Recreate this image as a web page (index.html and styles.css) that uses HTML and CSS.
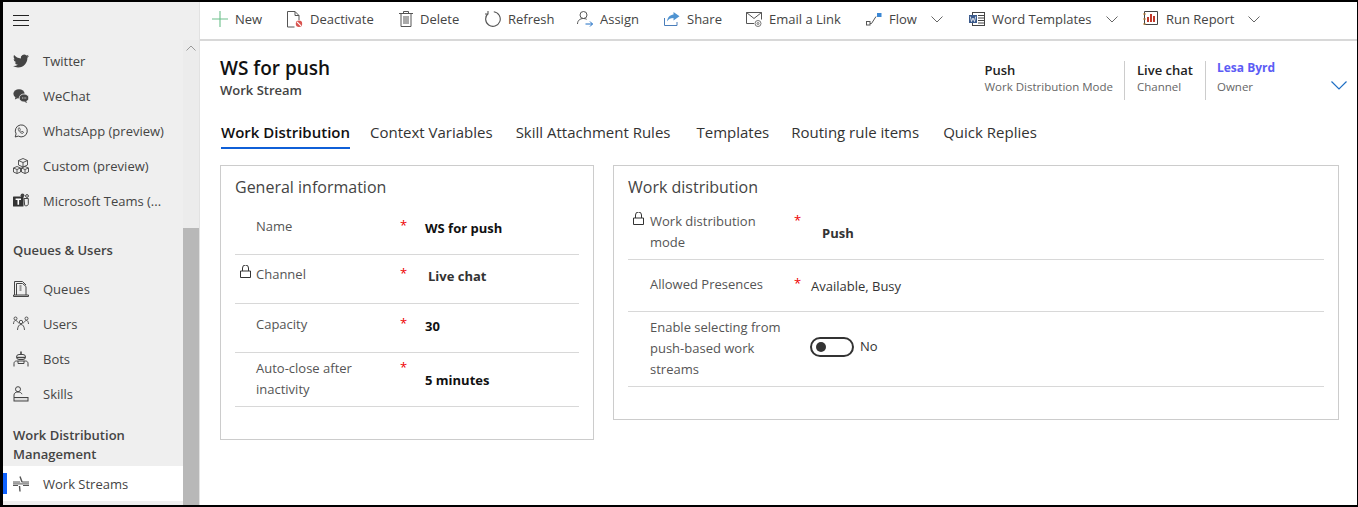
FILE: index.html
```html
<!DOCTYPE html>
<html>
<head>
    <title>Work Stream - WS for push</title>
    <link rel="stylesheet" href="styles.css">
</head>
<body>
    <div class="frame">
        <aside class="sidebar">
            <div class="burger"><span></span><span></span><span></span></div>
            <div class="side-body">
                <nav class="side-list">
                    <a class="side-item first">
                        <svg width="16" height="16" viewBox="0 0 24 24"><path fill="#444" d="M23.953 4.57a10 10 0 01-2.825.775 4.958 4.958 0 002.163-2.723c-.951.555-2.005.959-3.127 1.184a4.92 4.92 0 00-8.384 4.482C7.69 8.095 4.067 6.13 1.64 3.162a4.822 4.822 0 00-.666 2.475c0 1.71.87 3.213 2.188 4.096a4.904 4.904 0 01-2.228-.616v.06a4.923 4.923 0 003.946 4.827 4.996 4.996 0 01-2.212.085 4.936 4.936 0 004.604 3.417 9.867 9.867 0 01-6.102 2.105c-.39 0-.779-.023-1.17-.067a13.995 13.995 0 007.557 2.209c9.053 0 13.998-7.496 13.998-13.985 0-.21 0-.42-.015-.63A9.935 9.935 0 0024 4.59z"/></svg>
                        Twitter
                    </a>
                    <a class="side-item">
                        <svg width="16" height="16" viewBox="0 0 16 16"><ellipse cx="6" cy="5.8" rx="5.6" ry="4.6" fill="#444"/><path fill="#444" d="M2.5 9l-.6 2.6L5 10z"/><ellipse cx="11" cy="10" rx="4.8" ry="4" fill="#444" stroke="#efefef" stroke-width=".8"/><path fill="#444" d="M13 13l1.2 2-3-1.2z"/><path d="M9 10h.8M10.700 10h.8M12.400 10h.8" stroke="#efefef"/></svg>
                        WeChat
                    </a>
                    <a class="side-item">
                        <svg width="16" height="16" viewBox="0 0 16 16" fill="none" stroke="#444"><path d="M2.2 14l.9-3.1A6 6 0 1 1 5.3 13.1z"/><path d="M5.8 4.8c-.9.8-.6 2.3.6 3.8s2.8 2.2 3.6 1.5l.6-.9-1.600-1-.7.6c-.7-.3-1.200-.9-1.600-1.600l.6-.7-.9-1.700z" stroke-width=".8"/></svg>
                        WhatsApp (preview)
                    </a>
                    <a class="side-item">
                        <svg width="16" height="16" viewBox="0 0 16 16" fill="none" stroke="#444" stroke-width=".9"><path d="M5.500 2.500L10 .5l4.500 2v4.500L10 9 5.500 7z"/><path d="M5.500 2.500L10 4.500l4.500-2M10 4.500V9"/><path d="M.5 10l3.500-1.500L7.500 10v4L4 15.500.5 14z"/><path d="M.5 10L4 11.500 7.500 10M4 11.500v4"/><path d="M8.500 10l3.500-1.500 3.500 1.500v4L12 15.500 8.500 14z"/><path d="M8.500 10l3.500 1.500 3.500-1.500M12 11.500v4"/></svg>
                        Custom (preview)
                    </a>
                    <a class="side-item">
                        <svg width="16" height="16" viewBox="0 0 16 16"><circle cx="9.500" cy="2.300" r="1.900" fill="#444"/><circle cx="14" cy="3" r="1.400" fill="none" stroke="#444"/><path d="M11 5.500h4.300v5.300c0 1.300-1 2-2.200 2-.5 0-1-.1-1.400-.4z" fill="none" stroke="#444"/><rect x="0" y="3.500" width="10.500" height="10" rx=".6" fill="#333"/><path fill="#fff" d="M2.600 5.600h5.400v1.500H6.100v4.600H4.500V7.100H2.600z"/></svg>
                        Microsoft Teams (...
                    </a>
                    <h3 class="side-head queues">Queues &amp; Users</h3>
                    <a class="side-item">
                        <svg width="16" height="16" viewBox="0 0 16 16" fill="none" stroke="#444"><path d="M1.500 14V.5h8l3.500 3.500"/><path d="M3.500 14V2.500h6l3.500 3V14" /><path d="M.5 15.500h15v-1.500H.5z" fill="#ddd"/><path d="M6.500 5h2M6.500 7h2M6.500 9h2" /></svg>
                        Queues
                    </a>
                    <a class="side-item">
                        <svg width="16" height="16" viewBox="0 0 16 16" fill="none" stroke="#444" stroke-width=".9"><circle cx="8" cy="6" r="1.700"/><circle cx="2.500" cy="2.500" r="1.500"/><circle cx="13.500" cy="2.500" r="1.500"/><path d="M4.500 14c.2-3.400 1.500-5.500 3.500-5.500s3.300 2.100 3.500 5.500"/><path d="M.5 8c.1-2 .8-3.500 2-3.500s2.500 1.500 3.500 3M15.500 8c-.1-2-.8-3.500-2-3.500s-2.500 1.500-3.500 3"/></svg>
                        Users
                    </a>
                    <a class="side-item">
                        <svg width="16" height="16" viewBox="0 0 16 16" fill="none" stroke="#444"><path d="M8 .5v2.500" stroke-width="1.600"/><rect x="3.500" y="3.500" width="9" height="5" rx="2.500"/><path d="M4 6.500h8" stroke-width="1.400"/><path d="M1 15.500v-3c0-1.500 1-2.500 2.500-2.500h9c1.500 0 2.500 1 2.500 2.500v3M5 10v2.500h6V10"/></svg>
                        Bots
                    </a>
                    <a class="side-item">
                        <svg width="16" height="16" viewBox="0 0 16 16" fill="none" stroke="#444"><circle cx="5" cy="3.200" r="2.500"/><path d="M1 11V9c0-1.800 1.500-3 4-3 2 0 3.500.8 4 2.200"/><rect x="1" y="11.500" width="14" height="3.500" fill="#ddd"/></svg>
                        Skills
                    </a>
                    <h3 class="side-head work">Work Distribution Management</h3>
                    <a class="side-item selected">
                        <svg width="16" height="16" viewBox="0 0 16 16" fill="none" stroke="#555"><path d="M7 .5L9 6M7 15.500L6.500 10" stroke-width="1.400"/><path d="M0 6h7M0 9.500h5M16 6H9M16 9.500h-6" /><path d="M0 7.700h16" stroke-width="2" stroke="#999"/></svg>
                        Work Streams
                    </a>
                </nav>
                <div class="scrollbar">
                    <div class="scroll-up"><svg width="10" height="6" viewBox="0 0 10 6" fill="none" stroke="#999"><path d="M.5 5.500L5 1l4.500 4.500"/></svg></div>
                    <div class="scroll-thumb"></div>
                </div>
            </div>
        </aside>
        <div class="main">
            <div class="commandbar">
                <a class="cmd cmd-new">
                    <svg width="16" height="16" viewBox="0 0 16 16" fill="none" stroke="#6cc08b" stroke-width="1.100"><path d="M8 0v16M0 8h16"/></svg>
                    New
                </a>
                <a class="cmd cmd-deactivate">
                    <svg width="16" height="17" viewBox="0 0 16 17" fill="none"><path d="M.5 16V.5h7.500l4 4V9M8 .5v4h4M.5 16h7" stroke="#555"/><circle cx="12" cy="12.800" r="3.200" fill="#d9534f"/><path d="M10 10.800l4 4" stroke="#fff" stroke-width="1.200"/></svg>
                    Deactivate
                </a>
                <a class="cmd cmd-delete">
                    <svg width="14" height="16" viewBox="0 0 14 16" fill="none" stroke="#555"><path d="M0 2.500h14M4.500 2.500V.5h5v2M2 2.500v13h10v-13M5 5v8M7 5v8M9 5v8"/></svg>
                    Delete
                </a>
                <a class="cmd cmd-refresh">
                    <svg width="16" height="16" viewBox="0 0 16 16" fill="none" stroke="#555" stroke-width="1.100"><path d="M8.800 .8A7.300 7.300 0 1 1 3.200 2.500M3 0v3h-3"/></svg>
                    Refresh
                </a>
                <a class="cmd cmd-assign">
                    <svg width="16" height="16" viewBox="0 0 16 16" fill="none" stroke="#555"><circle cx="6.500" cy="4" r="3.500"/><path d="M.5 13c0-3.500 2.500-5.500 6-5.500 1.200 0 2.300.3 3.200.8"/><path d="M8.500 13h7M13 10.500l2.500 2.500-2.500 2.500" stroke="#1f6fc4"/></svg>
                    Assign
                </a>
                <a class="cmd cmd-share">
                    <svg width="16" height="16" viewBox="0 0 16 16" fill="none"><path d="M.5 7v7.500h12.500V11" stroke="#4a7ebb"/><path d="M9.500 1l6 4.300-6 4.300V7c-3 0-5 1-6.500 3.500C3.500 6.500 6 3.800 9.500 3.500z" fill="#4f93d1"/></svg>
                    Share
                </a>
                <a class="cmd cmd-email">
                    <svg width="16" height="15" viewBox="0 0 16 15" fill="none" stroke="#555"><path d="M8 11.500H.5V.5h15v7M.5 .5L8 6.500l7.500-6"/><circle cx="12" cy="11.500" r="3" stroke="#777"/><circle cx="12" cy="11.500" r="1" stroke="#777"/></svg>
                    Email a Link
                </a>
                <a class="cmd cmd-flow">
                    <svg width="16" height="16" viewBox="0 0 16 16" fill="none"><rect x=".5" y="10.500" width="3.500" height="3.500" stroke="#555"/><path d="M4 12.500h1.500L10 5.500" stroke="#555"/><rect x="11" y="2" width="4.500" height="4" fill="#3b87d4"/></svg>
                    Flow
                    <svg class="chev" width="12" height="7" viewBox="0 0 12 7" fill="none" stroke="#666"><path d="M.5 .5L6 6 11.500 .5"/></svg>
                </a>
                <a class="cmd cmd-word">
                    <svg width="16" height="15" viewBox="0 0 16 15" fill="none"><rect x="3.500" y=".5" width="12" height="13" stroke="#444" fill="#fff"/><path d="M9 3.500h6M9 6h6M9 8.500h6M9 11h6" stroke="#444"/><rect x="0" y="3" width="8" height="8" fill="#3a5a8c"/><path d="M1.300 4.500l1.200 5 1.500-3.500 1.500 3.500 1.200-5" stroke="#fff" stroke-width=".8"/></svg>
                    Word Templates
                    <svg class="chev" width="12" height="7" viewBox="0 0 12 7" fill="none" stroke="#666"><path d="M.5 .5L6 6 11.500 .5"/></svg>
                </a>
                <a class="cmd cmd-report">
                    <svg width="16" height="16" viewBox="0 0 16 16" fill="none"><path d="M1.500 .5h13v13h-13z" stroke="#444"/><path d="M5 11V6M8 11V3M11 11V5" stroke="#c0392b" stroke-width="2"/><path d="M0 3h3M0 8h3M0 13h3" stroke="#c98a3a"/></svg>
                    Run Report
                    <svg class="chev" width="12" height="7" viewBox="0 0 12 7" fill="none" stroke="#666"><path d="M.5 .5L6 6 11.500 .5"/></svg>
                </a>
            </div>
            <div class="content">
                <header class="record-head">
                    <div class="record-title">
                        <h1>WS for push</h1>
                        <div class="record-type">Work Stream</div>
                    </div>
                    <div class="record-meta">
                        <div class="meta meta-mode"><b>Push</b><span>Work Distribution Mode</span></div>
                        <div class="meta meta-channel"><b>Live chat</b><span>Channel</span></div>
                        <div class="meta meta-owner"><b class="owner">Lesa Byrd</b><span>Owner</span></div>
                        <svg class="head-chev" width="16" height="9" viewBox="0 0 16 9" fill="none" stroke="#1f6fc4" stroke-width="1.200"><path d="M.5 .5L8 8 15.500 .5"/></svg>
                    </div>
                </header>
                <div class="tabs">
                    <a class="tab active tab-dist">Work Distribution</a>
                    <a class="tab tab-context">Context Variables</a>
                    <a class="tab tab-skill">Skill Attachment Rules</a>
                    <a class="tab tab-templates">Templates</a>
                    <a class="tab tab-routing">Routing rule items</a>
                    <a class="tab">Quick Replies</a>
                </div>
                <div class="cards">
                    <section class="card card-general">
                        <h2>General information</h2>
                        <div class="row row-name">
                            <label>Name</label><i class="req">*</i>
                            <div class="val strong">WS for push</div>
                        </div>
                        <div class="row row-channel">
                            <label><svg class="lock" width="11" height="13" viewBox="0 0 11 13" fill="none" stroke="#333"><path d="M.5 6h10v6.500H.5zM2.500 6V3a3 3 0 0 1 6 0v3"/></svg>Channel</label><i class="req">*</i>
                            <div class="val strong locked">Live chat</div>
                        </div>
                        <div class="row row-capacity">
                            <label>Capacity</label><i class="req">*</i>
                            <div class="val strong">30</div>
                        </div>
                        <div class="row row-auto">
                            <label>Auto-close after inactivity</label><i class="req">*</i>
                            <div class="val strong">5 minutes</div>
                        </div>
                    </section>
                    <section class="card card-work">
                        <h2>Work distribution</h2>
                        <div class="row row-mode">
                            <label><svg class="lock" width="11" height="13" viewBox="0 0 11 13" fill="none" stroke="#333"><path d="M.5 6h10v6.500H.5zM2.500 6V3a3 3 0 0 1 6 0v3"/></svg>Work distribution mode</label><i class="req">*</i>
                            <div class="val strong locked">Push</div>
                        </div>
                        <div class="row row-presence">
                            <label>Allowed Presences</label><i class="req">*</i>
                            <div class="val">Available, Busy</div>
                        </div>
                        <div class="row row-enable">
                            <label>Enable selecting from push-based work streams</label><i class="req"></i>
                            <div class="val toggle-wrap"><span class="toggle"></span>No</div>
                        </div>
                    </section>
                </div>
            </div>
        </div>
    </div>
</body>
</html>
```

FILE: styles.css
```css
* {
    box-sizing: border-box;
}

html, body {
    margin: 0;
    padding: 0;
    height: 100%;
}

body {
    font-family: "Open Sans", "Liberation Sans", sans-serif;
    font-size: 13px;
    color: #333;
    background: #000;
}

.frame {
    display: flex;
    height: 507px;
    border-style: solid;
    border-color: #000;
    border-width: 2px 1px 2px 3px;
    background: #fff;
    overflow: hidden;
}

/* sidebar */
.sidebar {
    width: 196px;
    flex: none;
    display: flex;
    flex-direction: column;
    background: #efefef;
}

.burger {
    height: 38px;
    flex: none;
    padding: 13px 0 0 10px;
}

.burger span {
    display: block;
    width: 16px;
    height: 1px;
    background: #222;
    margin-bottom: 4px;
}

.side-body {
    flex: 1;
    display: flex;
    min-height: 0;
}

.side-list {
    width: 180px;
    flex: none;
}

.side-item {
    display: flex;
    align-items: center;
    gap: 14px;
    height: 35px;
    padding-left: 10px;
    color: #444;
    white-space: nowrap;
}

.side-item.first {
    margin-top: 3px;
}

.side-item svg {
    flex: none;
}

.side-item.selected {
    background: #fff;
    position: relative;
}

.side-item.selected::before {
    content: "";
    position: absolute;
    left: 0;
    top: 7px;
    width: 4px;
    height: 21px;
    background: #0f62fe;
}

.side-head {
    margin: 0;
    padding-left: 10px;
    font-size: 13px;
    font-weight: 600;
    line-height: 19px;
    color: #444;
}

.side-head.queues {
    padding-top: 23px;
    padding-bottom: 11px;
}

.side-head.work {
    padding-top: 15px;
    padding-bottom: 2px;
    width: 150px;
}

.scrollbar {
    width: 16px;
    flex: none;
    display: flex;
    flex-direction: column;
    background: #ececec;
}

.scroll-up {
    height: 188px;
    padding-top: 5px;
}

.scroll-up svg {
    display: block;
    margin: 0 auto;
}

.scroll-thumb {
    flex: 1;
    background: #b8b8b8;
}

/* command bar */
.main {
    flex: 1;
    min-width: 0;
    display: flex;
    flex-direction: column;
    border-left: 1px solid #e2e2e2;
}

.commandbar {
    height: 39px;
    flex: none;
    display: flex;
    align-items: center;
    padding: 0 0 3px 12px;
    border-bottom: 2px solid #d8d8d8;
}

.cmd {
    display: flex;
    align-items: center;
    gap: 7px;
    white-space: nowrap;
    color: #444;
    flex: none;
}

.cmd .chev {
    margin-left: 7px;
}

.cmd-new { width: 75px; }
.cmd-deactivate { width: 112px; }
.cmd-delete { width: 86px; }
.cmd-refresh { width: 92px; }
.cmd-assign { width: 87px; }
.cmd-share { width: 82px; }
.cmd-email { width: 120px; }
.cmd-flow { width: 103px; }
.cmd-word { width: 174px; }

/* record header */
.content {
    flex: 1;
    padding: 0 19px 0 20px;
}

.record-head {
    display: flex;
    justify-content: space-between;
    height: 75px;
}

.record-title h1 {
    margin: 14px 0 0;
    font-size: 19px;
    font-weight: 600;
    line-height: 26px;
    color: #111;
}

.record-type {
    font-size: 13px;
    font-weight: 600;
    line-height: 18px;
    color: #444;
}

.record-meta {
    display: flex;
    margin-top: 20px;
    height: 39px;
    position: relative;
    padding-right: 56px;
    margin-right: -15px;
}

.meta {
    display: flex;
    flex-direction: column;
    padding-right: 11px;
    font-size: 11.5px;
    line-height: 18px;
}

.meta b {
    font-weight: 600;
    font-size: 13px;
    color: #222;
}

.meta span {
    color: #666;
    margin-top: -1px;
}

.meta-channel, .meta-owner {
    border-left: 1px solid #ccc;
    padding-left: 12px;
}

.meta-channel {
    width: 81px;
}

.meta-owner {
    width: 92px;
    padding-left: 11px;
}

.meta .owner {
    color: #5c5cf5;
    font-size: 12px;
    font-weight: 700;
    margin-top: -2px;
    margin-bottom: 2px;
}

.head-chev {
    position: absolute;
    right: 6px;
    top: 20px;
}

/* tabs */
.tabs {
    display: flex;
    height: 30px;
    align-items: flex-start;
    margin: 3px 0 0 1px;
}

.tab {
    font-size: 15px;
    line-height: 24px;
    height: 30px;
    padding-top: 1px;
    color: #333;
    white-space: nowrap;
}

.tab.active {
    color: #111;
    font-weight: 600;
    border-bottom: 2px solid #0f5fd7;
}

.tab-dist { margin-right: 20px; }
.tab-context { margin-right: 23px; }
.tab-skill { margin-right: 26px; }
.tab-templates { margin-right: 22px; }
.tab-routing { margin-right: 24px; }

/* cards */
.cards {
    display: flex;
    align-items: flex-start;
    gap: 19px;
    margin-top: 16px;
}

.card {
    border: 1px solid #ccc;
    padding: 0 14px;
}

.card h2 {
    margin: 0;
    font-size: 16px;
    font-weight: 400;
    line-height: 22px;
    padding-top: 10px;
    color: #444;
}

.card-general {
    width: 374px;
    flex: none;
    height: 275px;
}

.card-work {
    width: 726px;
    flex: none;
    height: 255px;
}

.row {
    display: grid;
    border-bottom: 1px solid #d8d8d8;
    line-height: 21px;
    color: #555;
}

.card-general .row {
    grid-template-columns: 165px 25px 1fr;
}

.card-work .row {
    grid-template-columns: 166px 17px 1fr;
}

.row label {
    position: relative;
    padding-left: 21px;
    padding-right: 4px;
}

.card-work .row label {
    padding-left: 22px;
    padding-right: 12px;
}

.lock {
    position: absolute;
    left: 5px;
    top: 1px;
}

.req {
    color: #e00;
    font-style: normal;
    line-height: 18px;
}

.val {
    color: #333;
}

.val.strong {
    font-weight: 700;
    color: #111;
}

.val.locked {
    color: #333;
}

.row-name { height: 50px; padding-top: 11px; margin-top: 7px; }
.row-channel { height: 49px; padding-top: 9px; }
.row-capacity { height: 49px; padding-top: 10px; }
.row-auto { height: 54px; padding-top: 5px; }
.row-name .val, .row-channel .val, .row-capacity .val { padding-top: 2px; }
.row-channel .val { padding-left: 3px; }
.row-auto .val { padding-top: 12px; }

.row-mode { height: 62px; padding-top: 13px; }
.row-mode .val { padding: 12px 0 0 11px; }
.row-presence { height: 52px; padding-top: 14px; }
.row-presence .val { padding-top: 2px; }
.row-enable { height: 75px; padding-top: 5px; }

.toggle-wrap {
    display: flex;
    align-items: flex-start;
    gap: 6px;
    padding-top: 20px;
    margin-left: -1px;
    line-height: 18px;
}

.toggle {
    width: 44px;
    height: 20px;
    border: 2px solid #333;
    border-radius: 10px;
    position: relative;
    flex: none;
}

.toggle::before {
    content: "";
    position: absolute;
    left: 4px;
    top: 3px;
    width: 10px;
    height: 10px;
    border-radius: 50%;
    background: #333;
}
```
